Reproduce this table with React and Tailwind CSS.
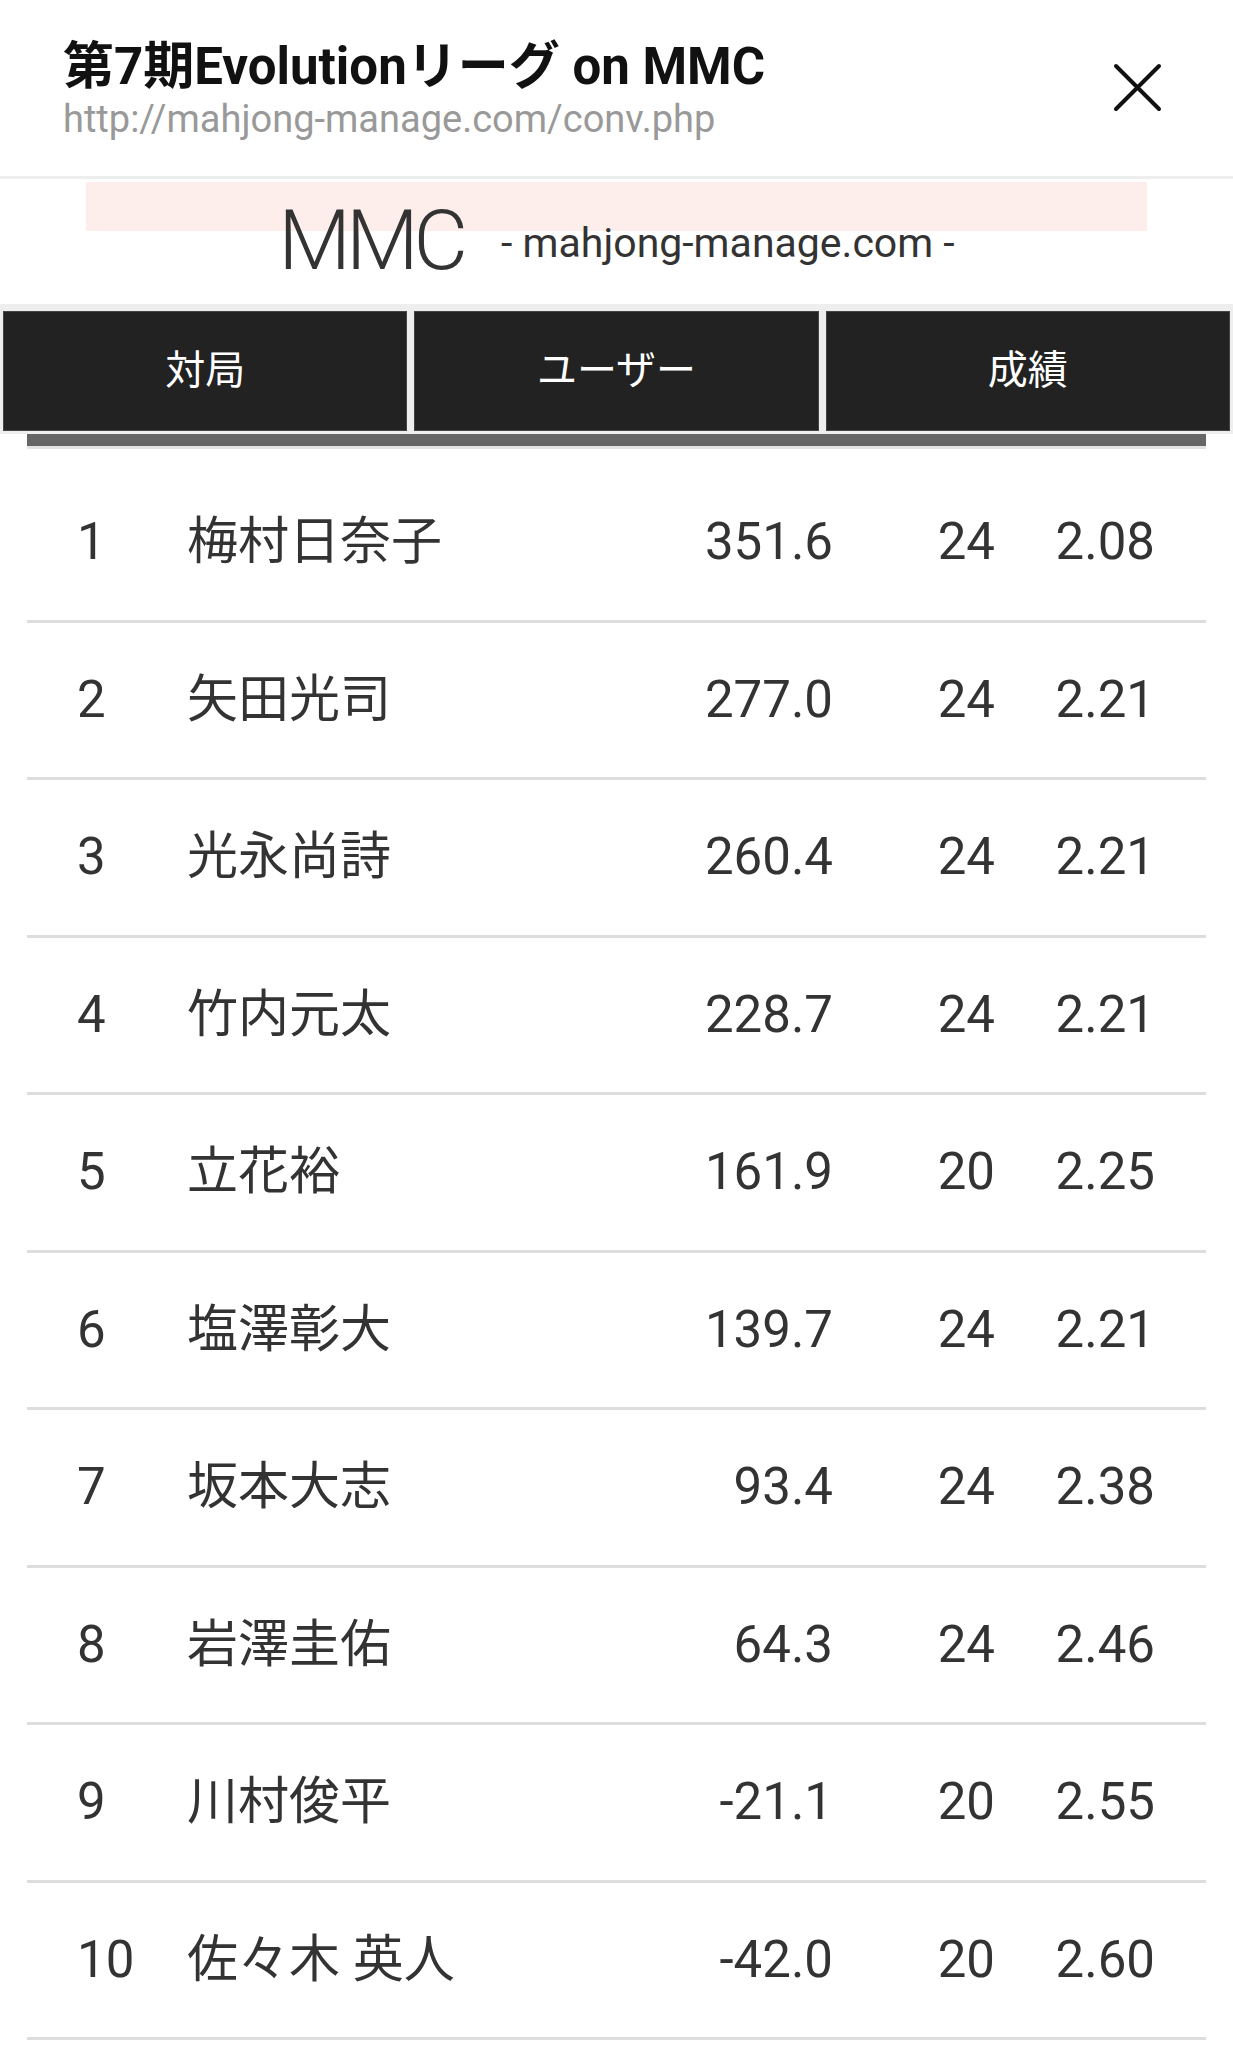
import React from "react";

const rows = [
  { rank: 1, name: "梅村日奈子", score: "351.6", games: 24, avg: "2.08" },
  { rank: 2, name: "矢田光司", score: "277.0", games: 24, avg: "2.21" },
  { rank: 3, name: "光永尚詩", score: "260.4", games: 24, avg: "2.21" },
  { rank: 4, name: "竹内元太", score: "228.7", games: 24, avg: "2.21" },
  { rank: 5, name: "立花裕", score: "161.9", games: 20, avg: "2.25" },
  { rank: 6, name: "塩澤彰大", score: "139.7", games: 24, avg: "2.21" },
  { rank: 7, name: "坂本大志", score: "93.4", games: 24, avg: "2.38" },
  { rank: 8, name: "岩澤圭佑", score: "64.3", games: 24, avg: "2.46" },
  { rank: 9, name: "川村俊平", score: "-21.1", games: 20, avg: "2.55" },
  { rank: 10, name: "佐々木 英人", score: "-42.0", games: 20, avg: "2.60" },
];

const tabs = ["対局", "ユーザー", "成績"];

const App = () => {
  return (
    <div className="w-[1233px] min-h-[2048px] bg-white text-[#333] font-['Roboto','Noto_Sans_CJK_JP',sans-serif]">
      {/* popup header */}
      <header className="flex justify-between h-[179px] border-b-[3px] border-[#eee] pl-[63px] pr-[71px]">
        <div className="pt-[37px]">
          <h1 className="text-[51px] leading-[60px] font-bold text-[#111]">第7期Evolutionリーグ on MMC</h1>
          <p className="-mt-[1px] text-[38px] leading-[46px] text-[#999]">http://mahjong-manage.com/conv.php</p>
        </div>
        <svg className="mt-[63px] w-[49px] h-[49px] shrink-0" viewBox="0 0 49 49" fill="none">
          <path d="M3 3 L46 46 M46 3 L3 46" stroke="#111" strokeWidth="4" strokeLinecap="round" />
        </svg>
      </header>

      {/* site logo */}
      <div className="pb-[21px]">
        <div className="mt-[3px] mx-[86px] h-[49px] bg-[#fdeeec]" />
        <div className="-mt-[32px] flex justify-center items-end gap-[38px]">
          <span className="text-[84px] leading-[84px] font-light tracking-[-0.06em]">MMC</span>
          <span className="pb-[15px] text-[41px] leading-[50px]">- mahjong-manage.com -</span>
        </div>
      </div>

      {/* tabs */}
      <nav className="bg-[#eee] pt-[7px] pb-[3px] px-[3px] grid grid-cols-3 gap-[7px]">
        {tabs.map((t) => (
          <div key={t} className="h-[120px] bg-[#222] border border-[#444] flex items-center justify-center text-white text-[40px]">
            {t}
          </div>
        ))}
      </nav>

      <div className="mx-[27px] h-[15px] bg-[#666] border-b-[3px] border-[#e3e3e3]" />

      {/* ranking */}
      <div className="mt-[16px] mx-[27px]">
        {rows.map((r) => (
          <div key={r.rank} className="h-[157.5px] border-b-[3px] border-[#ddd] flex items-center text-[51px]">
            <span className="w-[160px] pl-[50px]">{r.rank}</span>
            <span className="flex-1">{r.name}</span>
            <span className="w-[200px] text-right">{r.score}</span>
            <span className="w-[162px] text-right">{r.games}</span>
            <span className="w-[160px] text-right">{r.avg}</span>
            <span className="w-[51px]" />
          </div>
        ))}
      </div>
    </div>
  );
};

export default App;
